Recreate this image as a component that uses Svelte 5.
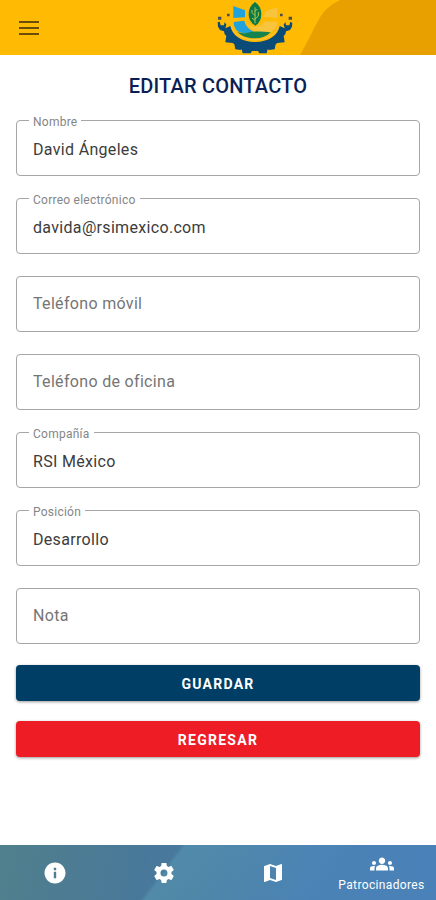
<script>
  let fields = $state([
    { id: 'nombre', label: 'Nombre', type: 'text', value: 'David Ángeles' },
    { id: 'correo', label: 'Correo electrónico', type: 'email', value: 'davida@rsimexico.com' },
    { id: 'movil', label: 'Teléfono móvil', type: 'tel', value: '' },
    { id: 'oficina', label: 'Teléfono de oficina', type: 'tel', value: '' },
    { id: 'compania', label: 'Compañía', type: 'text', value: 'RSI México' },
    { id: 'posicion', label: 'Posición', type: 'text', value: 'Desarrollo' },
    { id: 'nota', label: 'Nota', type: 'text', value: '' }
  ]);

  const tabs = [
    {
      name: 'Información',
      path: 'M12 1.5C6.2 1.5 1.5 6.2 1.5 12s4.7 10.5 10.5 10.5 10.5-4.7 10.5-10.5S17.8 1.5 12 1.5zm1.2 15.7h-2.4v-6.4h2.4zm0-8h-2.4V6.8h2.4z'
    },
    {
      name: 'Ajustes',
      path: 'M12,15.5A3.5,3.5 0 0,1 8.5,12A3.5,3.5 0 0,1 12,8.5A3.5,3.5 0 0,1 15.5,12A3.5,3.5 0 0,1 12,15.5M19.43,12.97C19.47,12.65 19.5,12.33 19.5,12C19.5,11.67 19.47,11.34 19.43,11L21.54,9.37C21.73,9.22 21.78,8.95 21.66,8.73L19.66,5.27C19.54,5.05 19.27,4.96 19.05,5.05L16.56,6.05C16.04,5.66 15.5,5.32 14.87,5.07L14.5,2.42C14.46,2.18 14.25,2 14,2H10C9.75,2 9.54,2.18 9.5,2.42L9.13,5.07C8.5,5.32 7.96,5.66 7.44,6.05L4.95,5.05C4.73,4.96 4.46,5.05 4.34,5.27L2.34,8.73C2.21,8.95 2.27,9.22 2.46,9.37L4.57,11C4.53,11.34 4.5,11.67 4.5,12C4.5,12.33 4.53,12.65 4.57,12.97L2.46,14.63C2.27,14.78 2.21,15.05 2.34,15.27L4.34,18.73C4.46,18.95 4.73,19.03 4.95,18.95L7.44,17.94C7.96,18.34 8.5,18.68 9.13,18.93L9.5,21.58C9.54,21.82 9.75,22 10,22H14C14.25,22 14.46,21.82 14.5,21.58L14.87,18.93C15.5,18.67 16.04,18.34 16.56,17.94L19.05,18.95C19.27,19.03 19.54,18.95 19.66,18.73L21.66,15.27C21.78,15.05 21.73,14.78 21.54,14.63L19.43,12.97Z'
    },
    {
      name: 'Mapa',
      path: 'M15,19L9,16.89V5L15,7.11M20.5,3C20.44,3 20.39,3 20.34,3L15,5.1L9,3L3.36,4.9C3.15,4.97 3,5.15 3,5.38V20.5A0.5,0.5 0 0,0 3.5,21C3.55,21 3.61,21 3.66,20.97L9,18.9L15,21L20.64,19.1C20.85,19 21,18.85 21,18.62V3.5A0.5,0.5 0 0,0 20.5,3Z'
    },
    {
      name: 'Patrocinadores',
      active: true,
      path: 'M12 12.75c1.63 0 3.07.39 4.24.9 1.08.48 1.76 1.56 1.76 2.73V18.6H6v-2.21c0-1.18.68-2.26 1.76-2.73 1.17-.52 2.61-.91 4.24-.91zM4 13c1.1 0 2-.9 2-2s-.9-2-2-2-2 .9-2 2 .9 2 2 2zm1.13 1.1c-.37-.06-.74-.1-1.13-.1-.99 0-1.93.21-2.78.58C.48 14.9 0 15.62 0 16.43V18.6h4.5v-2.21c0-.83.23-1.61.63-2.29zM20 13c1.1 0 2-.9 2-2s-.9-2-2-2-2 .9-2 2 .9 2 2 2zm4 3.43c0-.81-.48-1.53-1.22-1.85-.85-.37-1.79-.58-2.78-.58-.39 0-.76.04-1.13.1.4.68.63 1.46.63 2.29V18.6H24v-2.17zM12 5.6c1.8 0 3.2 1.4 3.2 3.2s-1.4 3.2-3.2 3.2-3.2-1.4-3.2-3.2 1.4-3.2 3.2-3.2z'
    }
  ];
</script>

<div class="app">
  <header>
    <svg class="wave" viewBox="0 0 136 55" preserveAspectRatio="none" aria-hidden="true">
      <path d="M0 55C6 45 12 32 18 21C23 11 30 5 40 0H136V55Z" fill="#e8a000" />
    </svg>
    <button class="menu" type="button" aria-label="Menú">
      <svg viewBox="0 0 24 24" width="24" height="24" aria-hidden="true">
        <path d="M2 5h20v2H2zM2 11h20v2H2zM2 17h20v2H2z" fill="#6b4d08" />
      </svg>
    </button>
    <div class="brand">
      <svg viewBox="0 0 270 165" width="90" height="55" role="img" aria-label="Logotipo">
        <path
          d="M23 67L29 65L32 76L42 76L44 66L49 74L46 85L61 78C66 106 95 126 135 126C175 126 204 106 209 78L224 85L221 74L226 66L228 76L238 76L241 65L247 69L246 80L240 90L228 94L226 103L221 107L224 127L202 129L197 133L194 148L177 150L173 148L170 160L148 160L144 153H126L122 160L98 160L95 148L91 150L76 148L73 133L68 129L46 127L49 107L44 103L42 94L30 90L24 80Z"
          fill="#0b4b78"
        />
        <path d="M24 50h10v9H24zM51 41h8v8h-8zM236 50h10v9h-10zM210 41h8v8h-8z" fill="#4b4d55" />
        <path d="M70 18L105 31V52L70 54Z" fill="#20a3dc" />
        <path d="M71 66L103 62C106 77 117 89 136 98C122 104 105 100 88 97C77 90 71 80 71 66Z" fill="#20a3dc" />
        <path d="M166 34L202 22V53L162 50Z" fill="#f8c43e" />
        <path d="M107 66C114 77 126 80 137 80C148 78 158 74 165 64L203 66C202 79 195 90 181 97L143 96C124 89 112 79 107 66Z" fill="#f8c43e" />
        <path d="M82 96C92 99 100 101 112 98C135 93 157 94 182 97C170 109 154 115 135 115C113 115 96 109 82 96Z" fill="#16844f" />
        <path d="M64 78C72 104 98 119 135 119C172 119 198 104 206 78" fill="none" stroke="#f6c94c" stroke-width="3" />
        <path d="M135 6C148 15 154 27 154 42C154 58 148 69 136 77C123 69 116 57 116 42C116 27 122 15 135 6Z" fill="#08794b" />
        <path d="M135 22V70M135 47L126 38V30M135 57L145 48V36M135 61L126 54M135 34L142 27" fill="none" stroke="#b5c64b" stroke-width="3" />
      </svg>
    </div>
  </header>

  <main>
    <h1>EDITAR CONTACTO</h1>
    <form onsubmit={(e) => e.preventDefault()}>
      <div class="fields">
        {#each fields as field (field.id)}
          <div class="field" class:filled={field.value !== ''}>
            <input id={field.id} type={field.type} bind:value={field.value} />
            <label for={field.id}>{field.label}</label>
          </div>
        {/each}
      </div>
      <div class="actions">
        <button class="save" type="submit">GUARDAR</button>
        <button class="back" type="button">REGRESAR</button>
      </div>
    </form>
  </main>

  <nav>
    {#each tabs as tab}
      <a href="#{tab.name.toLowerCase()}" aria-label={tab.name} aria-current={tab.active ? 'page' : undefined}>
        <svg viewBox="0 0 24 24" width="24" height="24" fill="#fff" aria-hidden="true"><path d={tab.path} /></svg>
        {#if tab.active}<span>{tab.name}</span>{/if}
      </a>
    {/each}
  </nav>
</div>

<style>
  :global(body) {
    margin: 0;
    background: #fff;
  }
  .app {
    display: flex;
    flex-direction: column;
    min-height: 100vh;
    font-family: Roboto, 'Liberation Sans', sans-serif;
    color: #3c3c3c;
  }
  header {
    position: relative;
    display: flex;
    align-items: center;
    height: 55px;
    background: #ffba04;
  }
  .wave {
    position: absolute;
    top: 0;
    right: 0;
    width: 136px;
    height: 55px;
  }
  .menu {
    position: relative;
    width: 58px;
    height: 48px;
    margin-right: 16px;
    padding: 0;
    border: 0;
    background: none;
    cursor: pointer;
  }
  .menu svg {
    display: block;
    margin: 0 auto;
  }
  .brand {
    position: relative;
    display: flex;
    flex: 1;
    justify-content: center;
  }
  main {
    flex: 1;
    padding: 15px 16px;
  }
  h1 {
    margin: 0 0 18px;
    font-size: 20px;
    line-height: 32px;
    font-weight: 500;
    letter-spacing: 0.01em;
    text-align: center;
    color: #0b1f57;
  }
  .fields {
    display: flex;
    flex-direction: column;
    gap: 22px;
  }
  .field {
    position: relative;
  }
  input {
    display: block;
    box-sizing: border-box;
    width: 100%;
    height: 56px;
    padding: 2px 16px 0;
    border: 1px solid #a6a6a6;
    border-radius: 4px;
    background: #fff;
    font: inherit;
    font-size: 16px;
    letter-spacing: 0.02em;
    color: #3c3c3c;
    outline: none;
  }
  input:focus {
    border-color: #003e66;
  }
  label {
    position: absolute;
    top: 16px;
    left: 13px;
    padding: 0 4px;
    background: #fff;
    font-size: 16px;
    line-height: 24px;
    letter-spacing: 0.02em;
    color: #757575;
    pointer-events: none;
  }
  .filled label,
  input:focus + label {
    top: -6px;
    font-size: 12px;
    line-height: 16px;
    color: #858585;
  }
  .actions {
    display: flex;
    flex-direction: column;
    gap: 20px;
    margin-top: 21px;
  }
  .actions button {
    height: 36px;
    padding: 2px 16px 0;
    border: 0;
    border-radius: 4px;
    font: inherit;
    font-size: 14px;
    font-weight: 700;
    letter-spacing: 0.09em;
    color: #fff;
    box-shadow: 0 1px 3px rgba(0, 0, 0, 0.4);
    cursor: pointer;
  }
  .save {
    background: #003e66;
  }
  .back {
    background: #ee1c25;
  }
  nav {
    display: flex;
    height: 55px;
    background:
      linear-gradient(127deg, transparent 38%, rgba(90, 155, 180, 0.5) 39%, rgba(80, 140, 190, 0) 75%),
      linear-gradient(100deg, #507f8c 0%, #48789b 36%, #4a82b5 70%, #4a81b8 100%);
  }
  nav a {
    display: flex;
    flex: 1;
    flex-direction: column;
    align-items: center;
    justify-content: center;
    gap: 1px;
    color: #fff;
    font-size: 12px;
    line-height: 16px;
    letter-spacing: 0.03em;
    text-decoration: none;
  }
  nav svg {
    display: block;
  }
</style>
